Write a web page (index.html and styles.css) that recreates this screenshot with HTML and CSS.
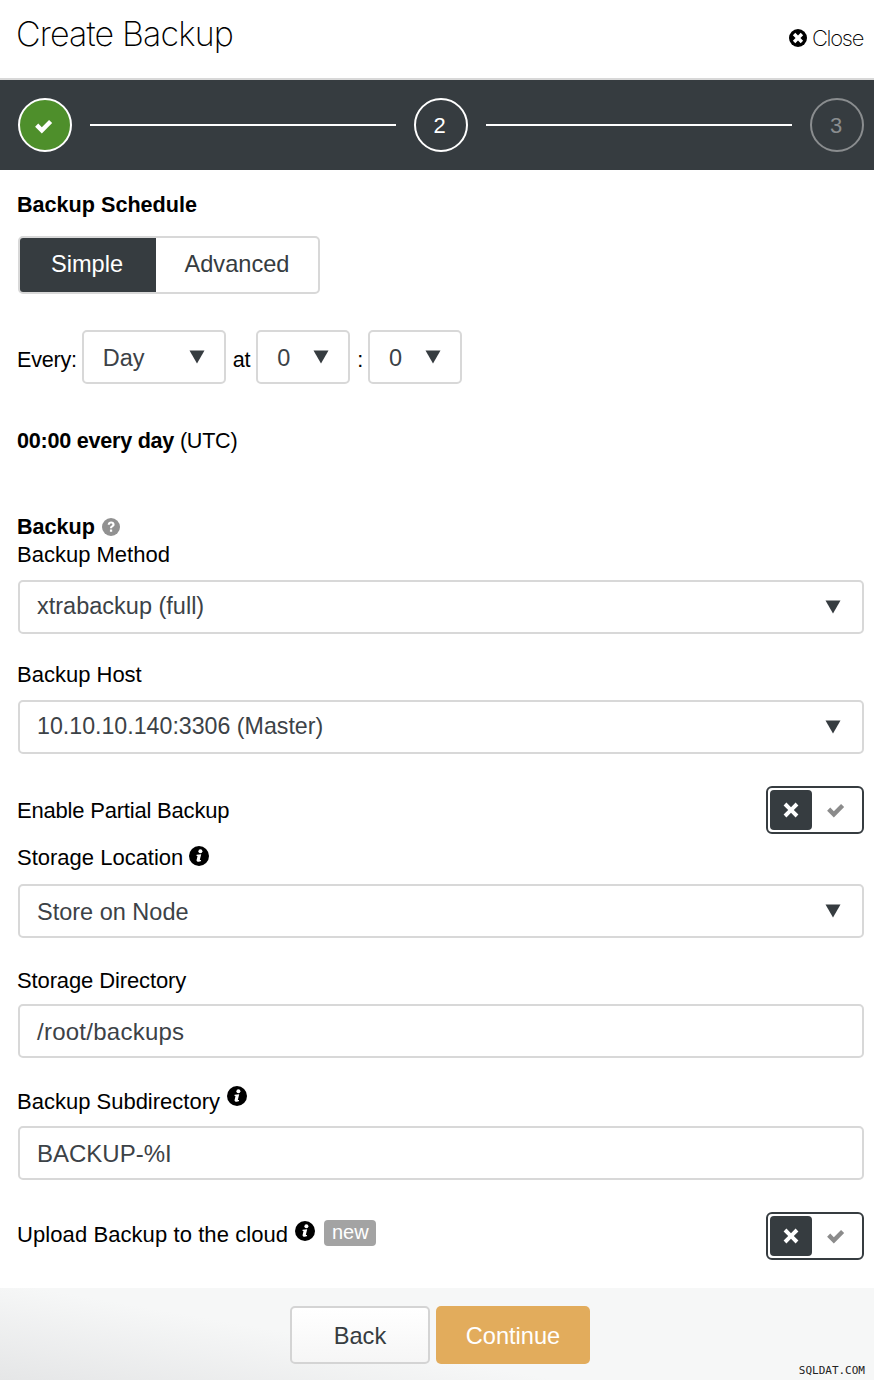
FILE: index.html
```html
<!DOCTYPE html>
<html lang="en">
<head>
<meta charset="utf-8">
<title>Create Backup</title>
<link rel="stylesheet" href="styles.css">
</head>
<body>
<svg class="defs" width="0" height="0" aria-hidden="true">
  <defs>
    <symbol id="tri" viewBox="0 0 16 14"><path d="M0.5 0.5h15L8 13.5z"/></symbol>
    <symbol id="info" viewBox="0 0 20 20"><circle cx="10" cy="10" r="10" fill="#000"/><circle cx="11.400" cy="5.200" r="2" fill="#fff"/><path d="M7.600 8.700l4.600-.5-1.400 5.900 1.300-.1-.3 1.300c-1.300.7-4.700 1-4.200-1.200l.9-4-1-.1z" fill="#fff"/></symbol>
    <symbol id="check" viewBox="0 0 20 20"><path d="M2.600 10.600l2.600-2.600 3 3 6-6 2.600 2.600-8.600 8.600z"/></symbol>
    <symbol id="cross" viewBox="0 0 20 20"><path d="M5.400 2.600L10 7.200l4.600-4.600 2.800 2.800L12.800 10l4.600 4.600-2.800 2.800L10 12.800l-4.600 4.600-2.800-2.800L7.200 10 2.600 5.400z"/></symbol>
  </defs>
</svg>

<header class="header">
  <h1 class="title">Create Backup</h1>
  <div class="close">
    <svg class="close-icon" viewBox="0 0 20 20"><circle cx="10" cy="10" r="10" fill="#000"/><path d="M7 4.300l3 3 3-3 2.700 2.700-3 3 3 3-2.700 2.700-3-3-3 3L4.300 13l3-3-3-3z" fill="#fff"/></svg>
    <span>Close</span>
  </div>
</header>

<nav class="steps">
  <div class="step step-done"><svg class="step-check" viewBox="0 0 20 20"><use href="#check"/></svg></div>
  <div class="step-line"></div>
  <div class="step step-num">2</div>
  <div class="step-line"></div>
  <div class="step step-num step-off">3</div>
</nav>

<main class="content">
  <h2 class="heading">Backup Schedule</h2>
  <div class="segment">
    <div class="seg seg-on">Simple</div>
    <div class="seg">Advanced</div>
  </div>

  <div class="every">
    <span class="every-label every-first">Every:</span>
    <div class="box box-day"><span>Day</span><svg class="tri"><use href="#tri"/></svg></div>
    <span class="every-label">at</span>
    <div class="box box-num"><span>0</span><svg class="tri"><use href="#tri"/></svg></div>
    <span class="every-label every-colon">:</span>
    <div class="box box-num"><span>0</span><svg class="tri"><use href="#tri"/></svg></div>
  </div>

  <p class="summary"><b>00:00 every day</b> (UTC)</p>

  <h2 class="heading heading-backup">Backup
    <svg class="help" viewBox="0 0 20 20"><circle cx="10" cy="10" r="10" fill="#919191"/><path d="M6.300 7.600C6.500 5.200 8 4 10.200 4c2.200 0 3.800 1.300 3.800 3.100 0 1.500-.9 2.200-1.800 2.800-.8.500-1 .8-1 1.600H8.900c0-1.500.4-2.200 1.400-2.900.8-.5 1.200-.8 1.200-1.400 0-.6-.5-1-1.300-1-.9 0-1.400.5-1.500 1.400z" fill="#fff"/><rect x="8.800" y="12.800" width="2.500" height="2.500" fill="#fff"/></svg>
  </h2>
  <label class="label label-method">Backup Method</label>
  <div class="box box-wide box-up"><span>xtrabackup (full)</span><svg class="tri"><use href="#tri"/></svg></div>

  <label class="label label-host">Backup Host</label>
  <div class="box box-wide box-up"><span class="text-ip">10.10.10.140:3306 (Master)</span><svg class="tri"><use href="#tri"/></svg></div>

  <div class="switch-row switch-partial">
    <span class="label label-partial">Enable Partial Backup</span>
    <div class="switch"><div class="switch-off"><svg viewBox="0 0 20 20"><use href="#cross"/></svg></div><div class="switch-on"><svg viewBox="0 0 20 20"><use href="#check"/></svg></div></div>
  </div>

  <label class="label label-loc">Storage Location <svg class="info"><use href="#info"/></svg></label>
  <div class="box box-wide"><span>Store on Node</span><svg class="tri"><use href="#tri"/></svg></div>

  <label class="label label-dir">Storage Directory</label>
  <div class="box box-wide"><span class="text-path">/root/backups</span></div>

  <label class="label label-sub">Backup Subdirectory <svg class="info"><use href="#info"/></svg></label>
  <div class="box box-wide"><span class="text-sub">BACKUP-%I</span></div>

  <div class="switch-row switch-upload">
    <span class="label label-upload">Upload Backup to the cloud <svg class="info"><use href="#info"/></svg> <span class="badge">new</span></span>
    <div class="switch"><div class="switch-off"><svg viewBox="0 0 20 20"><use href="#cross"/></svg></div><div class="switch-on"><svg viewBox="0 0 20 20"><use href="#check"/></svg></div></div>
  </div>
</main>

<footer class="footer">
  <div class="btn btn-back">Back</div>
  <div class="btn btn-next">Continue</div>
</footer>
<div class="watermark">SQLDAT.COM</div>
</body>
</html>
```
FILE: styles.css
```css
* { box-sizing: border-box; }
html, body { margin: 0; padding: 0; }
body {
  width: 874px;
  height: 1380px;
  overflow: hidden;
  position: relative;
  background: #fff;
  color: #000;
  font-family: "Liberation Sans", Arial, sans-serif;
  font-size: 22px;
}
.defs { position: absolute; }

.header {
  height: 80px;
  border-bottom: 2px solid #d8d8d8;
  display: flex;
  justify-content: space-between;
  padding: 0 11px 0 16px;
}
.title {
  margin: 12px 0 0;
  font-family: Inter, sans-serif;
  font-size: 34px;
  line-height: 44px;
  font-weight: 150;
  letter-spacing: -0.85px;
  color: #000;
}
.close {
  display: flex;
  align-items: center;
  gap: 5px;
  margin-top: 24px;
  height: 28px;
  font-family: Inter, sans-serif;
  font-weight: 150;
  font-size: 22px;
  letter-spacing: -1.3px;
  color: #000;
}
.close-icon { width: 18px; height: 18px; }

.steps {
  height: 90px;
  background: #363c40;
  display: flex;
  align-items: center;
  gap: 18px;
  padding: 0 10px 0 18px;
}
.step {
  width: 54px;
  height: 54px;
  flex: none;
  border: 2px solid #fff;
  border-radius: 50%;
  display: flex;
  align-items: center;
  justify-content: center;
  color: #fff;
  font-size: 22px;
}
.step-num { padding: 2px 3px 0 0; }
.step-done { background: #4e8f2b; }
.step-check { width: 24px; height: 24px; fill: #fff; margin: 2px 0 0 -2px; }
.step-off { border-color: #8a8d8f; color: #8a8d8f; padding-right: 2px; }
.step-line { flex: 1; height: 2px; background: #fff; }

.content { padding: 0 10px 0 18px; }
.heading {
  margin: 21px 0 0 -1px;
  font-size: 21.6px;
  line-height: 28px;
  font-weight: 700;
}
.segment {
  margin-top: 17px;
  width: 302px;
  height: 58px;
  display: flex;
  border: 2px solid #d8d8d8;
  border-radius: 5px;
  overflow: hidden;
}
.seg {
  display: flex;
  align-items: center;
  justify-content: center;
  color: #363c40;
  font-size: 23.6px;
  padding-bottom: 2px;
  flex: 1;
}
.seg-on { flex: none; width: 136px; background: #363c40; color: #fff; padding-right: 2px; }

.every {
  margin: 36px 0 0 -1px;
  display: flex;
  align-items: center;
  height: 54px;
}
.every-label { margin-top: 6px; padding: 0 6px 0 0; font-size: 21.6px; letter-spacing: -0.25px; white-space: pre; }
.every-first { padding-right: 5px; }
.every-colon { padding-right: 5px; }
.box {
  height: 54px;
  border: 2px solid #d8d8d8;
  border-radius: 5px;
  background: #fff;
  display: flex;
  align-items: center;
  justify-content: space-between;
  color: #3c4247;
  font-size: 23.5px;
  padding: 2px 19px 0 17px;
}
.tri { width: 16px; height: 14px; fill: #363c40; margin-top: -2px; }
.box-day { width: 144px; margin-right: 7px; padding-left: 19px; }
.box-num { width: 94px; margin-right: 7px; padding: 2px 19px 0 19px; }
.box-wide { width: 846px; padding: 2px 21px 0 17px; }
.box-up { padding: 0 21px 2px 17px; }
.box-up .tri { margin-top: 2px; }
.text-ip { font-size: 23.2px; }
.text-path { font-size: 24px; letter-spacing: 0.25px; }
.text-sub { font-size: 24px; }

.summary {
  margin: 43px 0 0 -1px;
  font-size: 21.6px;
  letter-spacing: -0.25px;
  line-height: 28px;
}
.heading-backup {
  margin-top: 58px;
  display: flex;
  align-items: center;
  gap: 7px;
}
.help { width: 18px; height: 18px; }
.label {
  display: flex;
  align-items: center;
  margin-left: -1px;
  line-height: 28px;
  white-space: pre;
}
.label-method { margin-bottom: 11px; }
.label-host { margin: 27px 0 11px -1px; }
.label-partial { padding-top: 2px; letter-spacing: -0.2px; }
.label-loc { margin: 10px 0 12px -1px; }
.label-dir { margin: 29px 0 9px -1px; letter-spacing: -0.12px; }
.label-sub { margin: 30px 0 10px -1px; }
.label-upload { letter-spacing: 0.08px; margin-top: -2px; }
.info { width: 20px; height: 20px; margin: -5px 0 0 0; }
.label-sub .info { margin: -13px 0 0 1px; }
.label-upload .info { margin: -9px 0 0 1px; }
.switch-row { display: flex; justify-content: space-between; align-items: center; }
.switch-partial { margin-top: 32px; }
.switch-upload { margin-top: 32px; }
.switch {
  width: 98px;
  height: 48px;
  border: 2px solid #363c40;
  border-radius: 6px;
  padding: 2px;
  display: flex;
}
.switch-off, .switch-on {
  width: 42px;
  height: 40px;
  border-radius: 4px;
  display: flex;
  align-items: center;
  justify-content: center;
}
.switch-off { background: #363c40; fill: #fff; }
.switch-on { fill: #8b8b8b; margin-left: 3px; }
.switch svg { width: 20px; height: 20px; }
.switch-on svg { width: 24px; height: 24px; }
.badge {
  margin-left: 9px;
  margin-top: -4px;
  width: 52px;
  height: 26px;
  border-radius: 4px;
  background: #a3a3a3;
  color: #fff;
  font-size: 20px;
  line-height: 25px;
  text-align: center;
}

.footer {
  position: absolute;
  left: 0;
  right: 0;
  bottom: 0;
  height: 92px;
  background: linear-gradient(190deg, #f6f7f7 60%, #e5e6e7 100%);
  display: flex;
  justify-content: flex-start;
  gap: 6px;
  padding: 18px 0 0 290px;
}
.btn {
  height: 58px;
  border-radius: 5px;
  display: flex;
  align-items: center;
  justify-content: center;
  font-size: 23.6px;
  padding-top: 3px;
}
.btn-back {
  width: 140px;
  border: 2px solid #d4d4d4;
  background: linear-gradient(#fff, #f6f6f6);
  color: #363c40;
}
.btn-next { width: 154px; background: #e2ac5c; color: #fff; }
.watermark {
  position: absolute;
  right: 9px;
  bottom: 3px;
  font-family: "DejaVu Sans Mono", monospace;
  font-size: 11px;
  line-height: 13px;
  color: #222;
}
```
